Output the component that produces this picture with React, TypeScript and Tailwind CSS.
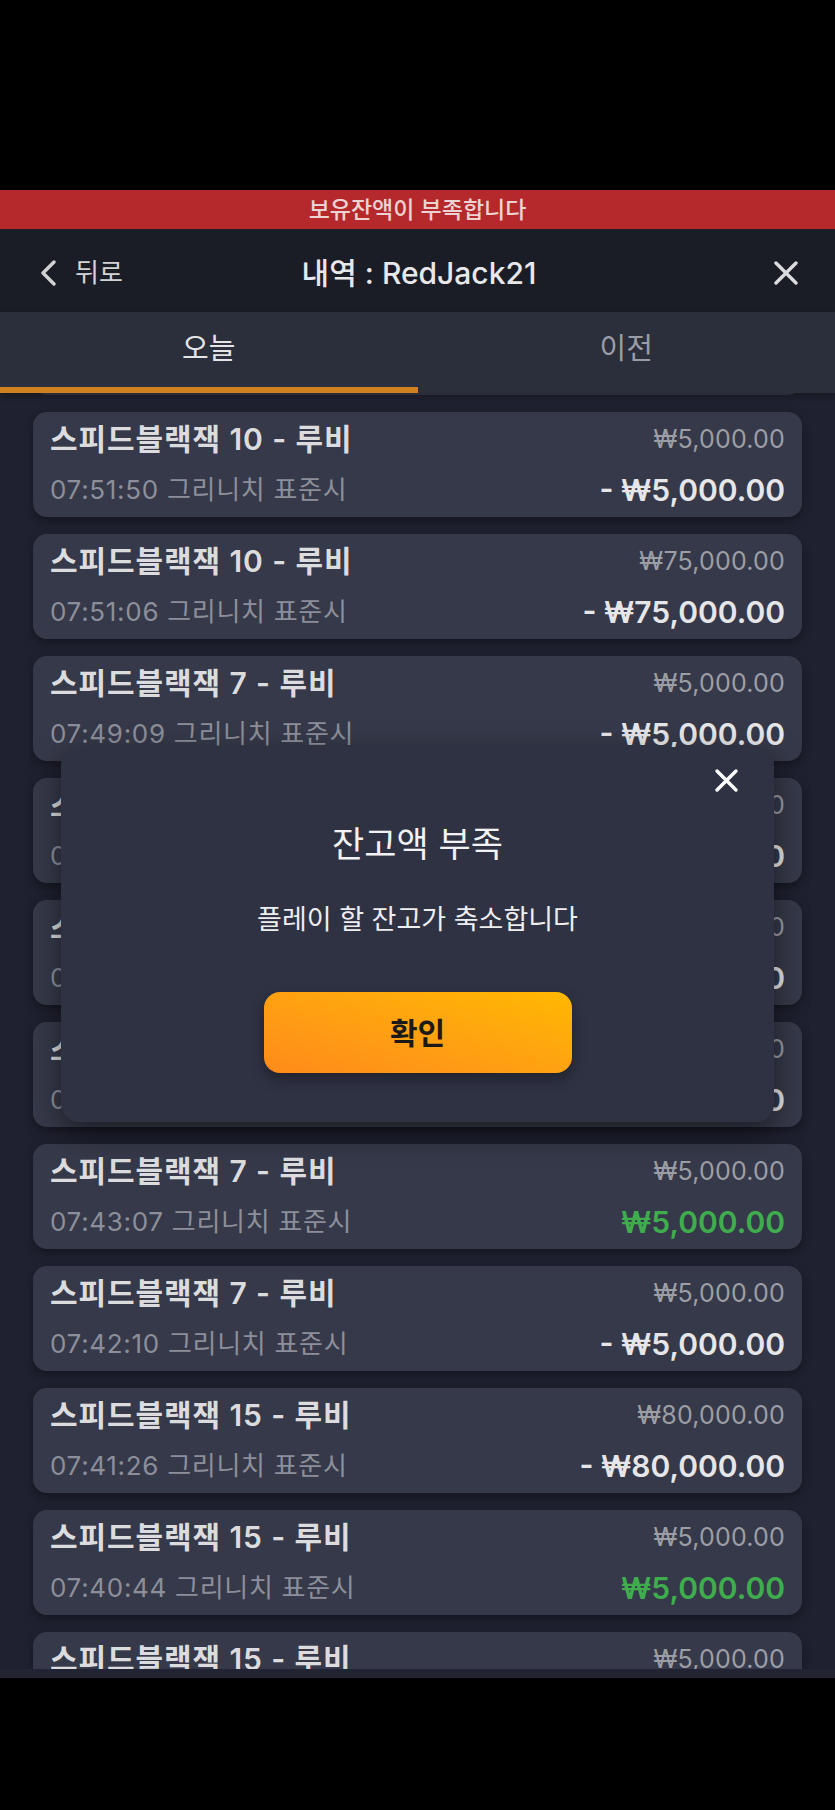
import React from "react";

type Row = {
  title: string;
  stake: string;
  time: string;
  result: string;
  win?: boolean;
};

const rows: Row[] = [
  { title: "스피드블랙잭 10 - 루비", stake: "₩5,000.00", time: "07:51:50 그리니치 표준시", result: "- ₩5,000.00" },
  { title: "스피드블랙잭 10 - 루비", stake: "₩75,000.00", time: "07:51:06 그리니치 표준시", result: "- ₩75,000.00" },
  { title: "스피드블랙잭 7 - 루비", stake: "₩5,000.00", time: "07:49:09 그리니치 표준시", result: "- ₩5,000.00" },
  { title: "스피드블랙잭 7 - 루비", stake: "₩5,000.00", time: "07:47:52 그리니치 표준시", result: "- ₩5,000.00" },
  { title: "스피드블랙잭 7 - 루비", stake: "₩5,000.00", time: "07:46:14 그리니치 표준시", result: "- ₩5,000.00" },
  { title: "스피드블랙잭 7 - 루비", stake: "₩5,000.00", time: "07:44:38 그리니치 표준시", result: "- ₩5,000.00" },
  { title: "스피드블랙잭 7 - 루비", stake: "₩5,000.00", time: "07:43:07 그리니치 표준시", result: "₩5,000.00", win: true },
  { title: "스피드블랙잭 7 - 루비", stake: "₩5,000.00", time: "07:42:10 그리니치 표준시", result: "- ₩5,000.00" },
  { title: "스피드블랙잭 15 - 루비", stake: "₩80,000.00", time: "07:41:26 그리니치 표준시", result: "- ₩80,000.00" },
  { title: "스피드블랙잭 15 - 루비", stake: "₩5,000.00", time: "07:40:44 그리니치 표준시", result: "₩5,000.00", win: true },
  { title: "스피드블랙잭 15 - 루비", stake: "₩5,000.00", time: "07:39:58 그리니치 표준시", result: "- ₩5,000.00" },
];

const FONT = "font-['Inter','Noto_Sans_CJK_KR',sans-serif]";

function Card({ r }: { r: Row }) {
  return (
    <div className="h-[105px] shrink-0 rounded-[14px] bg-[#363949] px-[17px] pt-[10px] pb-[7px] flex flex-col gap-[14px] shadow-[0_4px_10px_rgba(0,0,0,0.35)]">
      <div className="h-[34px] flex items-center justify-between">
        <span className="text-[30px] leading-[34px] font-semibold text-[#dcdcde] tracking-[0.9px]">{r.title}</span>
        <span className="text-[25px] leading-[34px] text-[#9c9ea6] tracking-[0.2px]">{r.stake}</span>
      </div>
      <div className="h-[40px] flex items-center justify-between">
        <span className="text-[26px] leading-[40px] text-[#8c8f9a] tracking-[0.7px]">{r.time}</span>
        <span
          className={
            r.win
              ? "text-[30px] leading-[40px] font-semibold text-[#3fad4e]"
              : "text-[30px] leading-[40px] font-semibold text-[#e6e6e8]"
          }
        >
          {r.result}
        </span>
      </div>
    </div>
  );
}

export default function App() {
  return (
    <div className={`relative w-[835px] h-[1810px] bg-black flex flex-col ${FONT}`}>
      <div className="h-[190px] shrink-0 bg-black" />
      {/* red banner */}
      <div className="h-[39px] shrink-0 bg-[#b5292d] flex items-center justify-center">
        <span className="text-[23px] leading-[30px] font-medium text-[#ecd2d2]">보유잔액이 부족합니다</span>
      </div>
      {/* header */}
      <div className="h-[83px] shrink-0 bg-[#1b1d26] flex items-center justify-between pl-[39px] pr-[36px] pt-[4px]">
        <div className="flex items-center gap-[18px] w-[130px]">
          <svg width="18" height="26" viewBox="0 0 18 26" fill="none">
            <path d="M15 2 L4 13 L15 24" stroke="#d2d2d4" strokeWidth="3.4" strokeLinecap="round" strokeLinejoin="round" />
          </svg>
          <span className="text-[26px] leading-[30px] text-[#d4d4d6]">뒤로</span>
        </div>
        <span className="text-[30px] leading-[36px] font-medium text-[#e8e8ea]">내역 : RedJack21</span>
        <div className="w-[130px] flex justify-end">
          <svg width="26" height="24" viewBox="0 0 26 24" fill="none">
            <path d="M3 2 L23 22 M23 2 L3 22" stroke="#dcdcde" strokeWidth="3.4" strokeLinecap="round" />
          </svg>
        </div>
      </div>
      {/* tabs */}
      <div className="h-[81px] shrink-0 bg-[#2b2e3b] flex relative z-10 shadow-[0_3px_6px_rgba(0,0,0,0.3)]">
        <div className="flex-1 flex flex-col">
          <div className="flex-1 flex items-center justify-center pb-[2px]">
            <span className="text-[29px] leading-[34px] text-[#e4e4e6]">오늘</span>
          </div>
          <div className="h-[6px] bg-[#d0801f]" />
        </div>
        <div className="flex-1 flex flex-col">
          <div className="flex-1 flex items-center justify-center pb-[2px]">
            <span className="text-[29px] leading-[34px] text-[#9a9ca6]">이전</span>
          </div>
          <div className="h-[6px]" />
        </div>
      </div>
      {/* list */}
      <div className="h-[1276px] shrink-0 bg-[#1f2130] overflow-hidden">
        <div className="mt-[-103px] px-[33px] flex flex-col gap-[17px]">
          <div className="h-[105px] shrink-0 rounded-[14px] bg-[#363949]" />
          {rows.map((r, i) => (
            <Card key={i} r={r} />
          ))}
        </div>
      </div>
      <div className="h-[9px] shrink-0 bg-[#222433]" />
      <div className="flex-1 bg-black" />

      {/* modal */}
      <div className="absolute left-[61px] top-[747px] w-[713px] h-[375px] rounded-[18px] bg-[#2f3243] shadow-[0_10px_30px_rgba(0,0,0,0.5)] flex flex-col items-center pt-[76px]">
        <div className="absolute right-[35px] top-[21px]">
          <svg width="25" height="25" viewBox="0 0 25 25" fill="none">
            <path d="M3 3 L22 22 M22 3 L3 22" stroke="#ffffff" strokeWidth="3.4" strokeLinecap="round" />
          </svg>
        </div>
        <span className="text-[35px] leading-[42px] font-normal text-[#f2f2f4]">잔고액 부족</span>
        <span className="mt-[38px] text-[27px] leading-[34px] font-normal text-[#eeeef0]">플레이 할 잔고가 축소합니다</span>
        <button className="mt-[55px] w-[308px] h-[81px] rounded-[16px] bg-linear-to-tr from-[#ff8a1a] to-[#ffb800] shadow-[0_6px_14px_rgba(0,0,0,0.35)] flex items-center justify-center">
          <span className="text-[30px] leading-[36px] font-bold text-[#1c1a18]">확인</span>
        </button>
      </div>
    </div>
  );
}
